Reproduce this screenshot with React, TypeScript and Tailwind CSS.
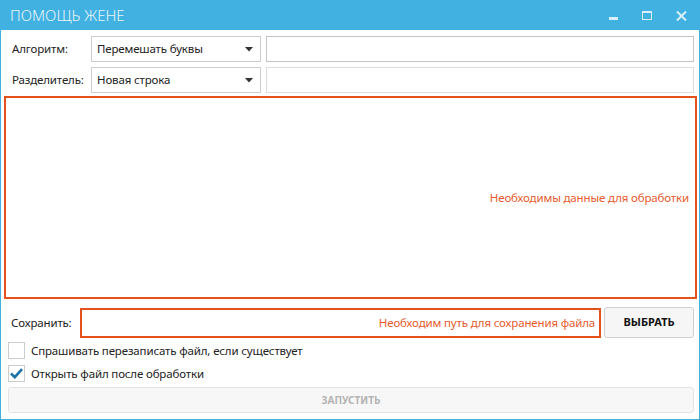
import React from "react";

const font = { fontFamily: '"Noto Sans", "Open Sans", sans-serif' };

function Combo({ text }: { text: string }) {
  return (
    <div className="w-[170px] h-[26px] border border-[#cccccc] bg-white flex items-center pl-[5px] pr-[7px] text-[11.5px] tracking-[-0.15px] text-[#222]">
      <span className="flex-1">{text}</span>
      <svg width="8" height="5" viewBox="0 0 8 5">
        <path d="M0 0 L8 0 L4 4.5 Z" fill="#333" />
      </svg>
    </div>
  );
}

const txt = "text-[11.5px] tracking-[-0.15px]";

export default function App() {
  return (
    <div
      className="w-[700px] h-[420px] border border-[#41b1e1] bg-white flex flex-col overflow-hidden"
      style={font}
    >
      <div className="h-[29px] bg-[#41b1e1] flex items-center pl-[9px] pr-[12px] shrink-0">
        <span className="flex-1 text-[15px] font-light text-[#e8f6fc]">ПОМОЩЬ ЖЕНЕ</span>
        <div className="flex items-center gap-[24px] text-[#d8f0fb]">
          <svg width="9" height="10" viewBox="0 0 9 10">
            <rect x="0" y="6" width="9" height="3" fill="#d8f0fb" />
          </svg>
          <svg width="10" height="9" viewBox="0 0 10 9">
            <rect x="0.5" y="0.5" width="9" height="8" fill="none" stroke="#d8f0fb" strokeWidth="1" />
            <rect x="0" y="0" width="10" height="2" fill="#d8f0fb" />
          </svg>
          <svg width="11" height="10" viewBox="0 0 11 10">
            <path d="M1 0.5 L10 9.5 M10 0.5 L1 9.5" stroke="#d8f0fb" strokeWidth="2" />
          </svg>
        </div>
      </div>

      <div className="flex-1 flex flex-col pl-[5px] pr-[5px] pt-[6px]">
        <div className="flex items-center h-[26px]">
          <div className={`w-[85px] pl-[6px] ${txt} text-[#222]`}>Алгоритм:</div>
          <Combo text="Перемешать буквы" />
          <div className="ml-[5px] flex-1 h-[26px] border border-[#c4c4c4] bg-white" />
        </div>
        <div className="flex items-center h-[26px] mt-[5px]">
          <div className={`w-[85px] pl-[6px] ${txt} text-[#222]`}>Разделитель:</div>
          <Combo text="Новая строка" />
          <div className="ml-[5px] flex-1 h-[26px] border border-[#dcdcdc] bg-white" />
        </div>

        <div className="mt-[3px] -ml-[2px] -mr-[3px] h-[203px] border-2 border-[#e4511d] flex items-center justify-end pr-[6px]">
          <span className={`${txt} text-[#e55b2d]`}>Необходимы данные для обработки</span>
        </div>

        <div className="flex items-center mt-[8px] h-[31px]">
          <div className={`w-[74px] pl-[5px] ${txt} text-[#222]`}>Сохранить:</div>
          <div className="w-[522px] h-[30px] border-2 border-[#e4511d] flex items-center justify-end pr-[4px]">
            <span className={`${txt} text-[#e55b2d]`}>Необходим путь для сохранения файла</span>
          </div>
          <button className="ml-[3px] w-[90px] h-[31px] rounded-[3px] border border-[#cfcfcf] bg-[#f6f6f6] text-[11px] font-bold text-[#111] flex items-center justify-center">
            ВЫБРАТЬ
          </button>
        </div>

        <div className="flex items-center mt-[4px] h-[17px] pl-[2px]">
          <div className="w-[17px] h-[17px] border border-[#cccccc] bg-white" />
          <span className={`ml-[6px] ${txt} text-[#222]`}>Спрашивать перезаписать файл, если существует</span>
        </div>
        <div className="flex items-center mt-[6px] h-[17px] pl-[2px]">
          <div className="w-[17px] h-[17px] border border-[#cccccc] bg-white flex items-center justify-center">
            <svg width="13" height="11" viewBox="0 0 13 11">
              <path d="M1 5.5 L4.8 9.2 L12 1.2" fill="none" stroke="#1f72a8" strokeWidth="2.6" />
            </svg>
          </div>
          <span className={`ml-[6px] ${txt} text-[#222]`}>Открыть файл после обработки</span>
        </div>

        <button className="mt-[5px] ml-[2px] h-[26px] rounded-[3px] border border-[#e3e3e3] bg-[#f7f7f7] text-[10px] font-bold text-[#b3b3b3] flex items-center justify-center">
          ЗАПУСТИТЬ
        </button>
      </div>
    </div>
  );
}
